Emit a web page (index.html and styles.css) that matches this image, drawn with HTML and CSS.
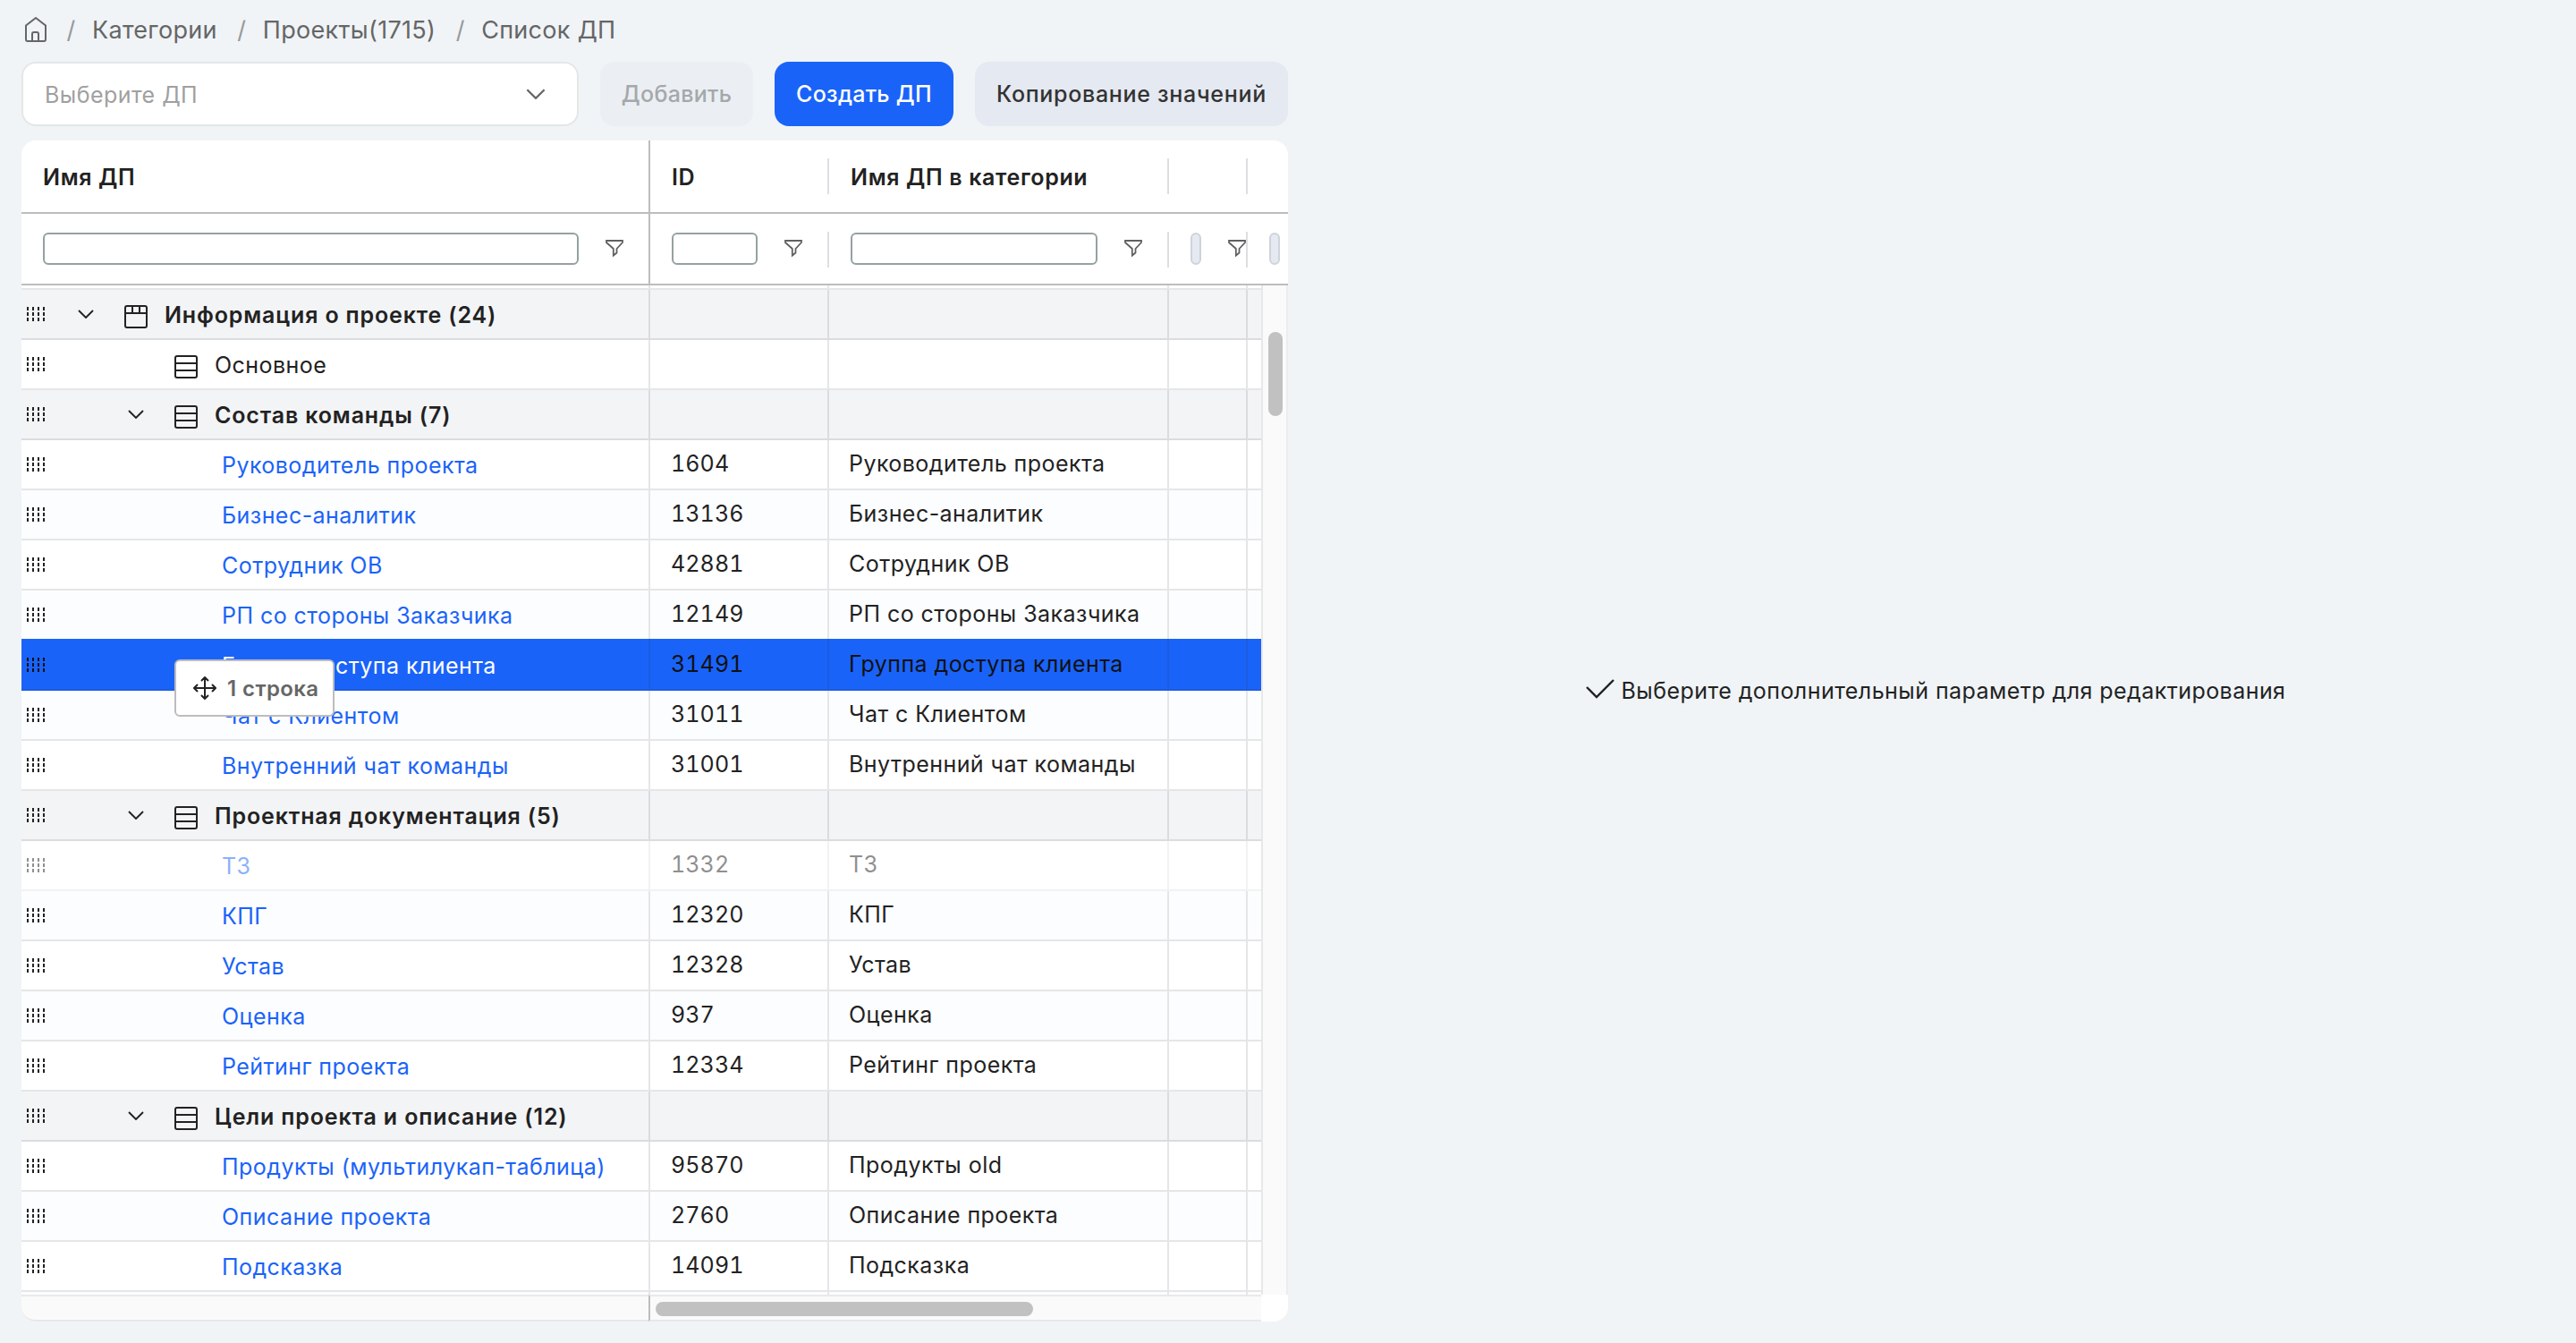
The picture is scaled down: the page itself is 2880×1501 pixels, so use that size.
FILE: index.html
```html
<!DOCTYPE html>
<html lang="ru">
<head>
	<meta charset="utf-8">
	<title>Список ДП</title>
	<link rel="stylesheet" href="styles.css">
</head>
<body>
	<svg class="sprite">
		<symbol id="grip" viewBox="0 0 20 16"><path d="M1 0v16M7 0v16M13 0v16M19 0v16" stroke="currentColor" stroke-width="2" stroke-dasharray="4 2"/></symbol>
		<symbol id="down" viewBox="0 0 18 10"><path d="M1 1l8 8 8-8" fill="none" stroke="currentColor" stroke-width="1.900"/></symbol>
		<symbol id="tab" viewBox="0 0 26 26"><path d="M3 1h20a2 2 0 0 1 2 2v20a2 2 0 0 1-2 2H3a2 2 0 0 1-2-2V3a2 2 0 0 1 2-2zM1 9h24M9 1v8M17 1v8" fill="none" stroke="currentColor" stroke-width="2"/></symbol>
		<symbol id="block" viewBox="0 0 26 26"><path d="M3 1h20a2 2 0 0 1 2 2v20a2 2 0 0 1-2 2H3a2 2 0 0 1-2-2V3a2 2 0 0 1 2-2zM1 9h24M1 17h24" fill="none" stroke="currentColor" stroke-width="2"/></symbol>
		<symbol id="filter" viewBox="0 0 20 20"><path d="M1 1h18v2l-6.500 7v4.500L8.800 17.500V10L1 3z" fill="none" stroke="currentColor" stroke-width="1.800"/></symbol>
	</svg>

	<div class="page">
		<section class="left">
			<nav class="crumbs">
				<svg class="home" viewBox="0 0 24 28"><path d="M1 9.500L12 1l11 8.500V25a2 2 0 0 1-2 2H3a2 2 0 0 1-2-2zM8 27v-8a2 2 0 0 1 2-2h3a2 2 0 0 1 2 2v8" fill="none" stroke="currentColor" stroke-width="2"/></svg>
				<i>/</i><a>Категории</a><i>/</i><a>Проекты(1715)</a><i>/</i><a>Список ДП</a>
			</nav>

			<div class="toolbar">
				<div class="select"><span>Выберите ДП</span><svg class="arrow"><use href="#down"/></svg></div>
				<button class="btn btn-disabled">Добавить</button>
				<button class="btn btn-primary">Создать ДП</button>
				<button class="btn btn-grey">Копирование значений</button>
			</div>

			<div class="grid">
				<div class="head titles">
					<div class="cell c1">Имя ДП</div>
					<div class="cell c2">ID</div>
					<div class="cell c3">Имя ДП в категории</div>
					<div class="cell c4"></div>
					<div class="cell c5"></div>
				</div>
				<div class="head filters">
					<div class="cell c1"><span class="input"></span><svg class="filter"><use href="#filter"/></svg></div>
					<div class="cell c2"><span class="input"></span><svg class="filter"><use href="#filter"/></svg></div>
					<div class="cell c3"><span class="input"></span><svg class="filter"><use href="#filter"/></svg></div>
					<div class="cell c4"><span class="input off"></span><svg class="filter"><use href="#filter"/></svg></div>
					<div class="cell c5"><span class="input off"></span></div>
				</div>
				<div class="body">
					<div class="rows" id="rows"></div>
					<div class="vscroll"><div class="vthumb"></div></div>
				</div>
				<div class="foot">
					<div class="foot-left"></div>
					<div class="hscroll"><div class="hthumb"></div></div>
				</div>

				<div class="drag">
					<svg viewBox="0 0 26 26"><path d="M13 1v24M1 13h24M9 5l4-4 4 4M9 21l4 4 4-4M5 9l-4 4 4 4M21 9l4 4-4 4" fill="none" stroke="currentColor" stroke-width="2"/></svg>
					<span>1 строка</span>
				</div>
			</div>
		</section>

		<section class="right">
			<svg viewBox="0 0 32 22"><path d="M1 9l11 11L31 1" fill="none" stroke="currentColor" stroke-width="2.400"/></svg>
			<span>Выберите дополнительный параметр для редактирования</span>
		</section>
	</div>
	<script src="script.js"></script>
</body>
</html>
```

FILE: styles.css
```css
* {
	box-sizing: border-box;
	margin: 0;
	padding: 0;
}

body {
	height: 1501px;
	overflow: hidden;
	background: #f0f4f7;
	color: #222;
	font-family: Inter, "Liberation Sans", sans-serif;
	font-size: 25px;
	letter-spacing: 0.45px;
}

.sprite {
	display: none;
}

svg {
	display: block;
	flex: none;
}

.page {
	display: flex;
	height: 1501px;
}

.left {
	width: 1440px;
	padding-left: 24px;
}

/* Breadcrumbs */
.crumbs {
	display: flex;
	align-items: center;
	height: 69px;
	padding: 0 0 3px 4px;
	color: #666;
	font-size: 27px;
	letter-spacing: 0.3px;
}

.crumbs i {
	width: 51px;
	padding-left: 4px;
	text-align: center;
	font-style: normal;
	color: #999;
}

.home {
	width: 24px;
	height: 28px;
}

/* Toolbar */
.toolbar {
	display: flex;
	gap: 24px;
	height: 72px;
	margin-bottom: 16px;
}

.select {
	display: flex;
	align-items: center;
	justify-content: space-between;
	width: 623px;
	padding: 0 35px 0 24px;
	border: 2px solid #e5e6e6;
	border-radius: 16px;
	background: #fff;
	color: #a0a0a0;
}

.select span {
	padding-top: 2px;
}

.arrow {
	width: 22px;
	height: 12px;
	color: #666;
}

.btn {
	border: none;
	border-radius: 16px;
	font: inherit;
	font-weight: 500;
	letter-spacing: 0.3px;
	white-space: nowrap;
}

.btn-disabled {
	width: 171px;
	background: #ebeff3;
	color: #a5a8ab;
}

.btn-primary {
	width: 200px;
	background: #1a63f9;
	color: #fff;
}

.btn-grey {
	width: 350px;
	background: #e5e9f1;
	color: #333;
	letter-spacing: 0.7px;
}

/* Table */
.grid {
	position: relative;
	height: 1320px;
	border-radius: 16px;
	background: #fff;
}

.head {
	display: flex;
	height: 82px;
	border-bottom: 2px solid #bdbdbd;
	font-weight: 600;
	letter-spacing: 0.65px;
	overflow: hidden;
}

.filters {
	height: 80px;
}

.cell {
	display: flex;
	align-items: center;
	flex: none;
	position: relative;
	white-space: nowrap;
}

.c1 { width: 703px; }
.c2 { width: 200px; }
.c3 { width: 380px; }
.c4 { width: 88px; }
.c5 { width: 45px; }

.head .cell {
	padding-left: 24px;
}

.titles .cell {
	padding-top: 2px;
}

.head .c1 {
	border-right: 2px solid #bdbdbd;
}

.head .c2::after,
.head .c3::after,
.head .c4::after {
	content: "";
	position: absolute;
	right: 0;
	top: 20px;
	width: 2px;
	height: 40px;
	background: #dcdfe2;
}

.input {
	flex: none;
	height: 36px;
	border: 2px solid #95a1a1;
	border-radius: 6px;
	background: #fff;
}

.c1 .input { width: 599px; }
.c2 .input { width: 96px; }
.c3 .input { width: 276px; }

.input.off {
	width: 12px;
	border-color: #ced4d9;
	background: #e5e9f1;
}

.filter {
	width: 20px;
	height: 20px;
	margin-left: 30px;
	color: #606060;
}

.body {
	display: flex;
	height: 1128px;
	overflow: hidden;
}

/* the list is scrolled, so the first row shows only its bottom edge */
.rows {
	width: 1386px;
	margin-top: -51px;
	overflow: hidden;
}

.row {
	display: flex;
	height: 56px;
	background: #fff;
}

.row.even {
	background: #fcfdff;
}

.row .cell {
	border-bottom: 2px solid #e4e6e7;
	border-right: 2px solid #e4e6e7;
}

.row .c2,
.row .c3 {
	padding: 0 0 2px 22px;
}

.row .c2 {
	font-variant-numeric: tabular-nums;
	letter-spacing: 0.1px;
	padding-left: 23px;
}

.row .c5 {
	border-right: none;
}

.row.group {
	background: #f3f4f6;
	font-weight: 600;
	letter-spacing: 0.85px;
}

.row.group .cell {
	border-color: #dadcdf;
}

.row .c1 a,
.row .c1 span {
	padding-top: 2px;
}

.row .c1 a {
	color: #1a63f9;
	margin-left: 198px;
}

.row.selected {
	position: relative;
	height: 58px;
	margin-top: -2px;
	background: #1a63f9;
	color: #111;
}

.row.selected .cell {
	padding-top: 2px;
	border-color: #1c5ce0;
}

.row.selected .c1 a {
	color: #fff;
}

.row.faded {
	opacity: 0.5;
}

.grip {
	width: 20px;
	height: 16px;
	margin-left: 6px;
}

.chev {
	width: 18px;
	height: 10px;
	margin-right: 34px;
}

.lvl1 { margin-left: 37px; }
.lvl2 { margin-left: 93px; }

.icon {
	width: 26px;
	height: 26px;
	margin-top: 6px;
	margin-right: 19px;
}

.lone {
	margin-left: 145px;
}

/* Scrollbars */
.vscroll {
	width: 30px;
	padding: 52px 0 0 6px;
	border-left: 2px solid #e8e8e8;
	border-right: 2px solid #ededed;
	background: #fafafa;
}

.vthumb {
	width: 16px;
	height: 94px;
	border-radius: 8px;
	background: #c1c1c1;
}

.foot {
	display: flex;
	height: 30px;
}

.foot-left {
	width: 701px;
	border: solid #e8e8e8;
	border-width: 2px 0;
	border-radius: 0 0 0 16px;
	background: #fafafa;
}

.hscroll {
	width: 685px;
	padding: 6px 0 0 6px;
	border: solid #e8e8e8;
	border-width: 2px 0;
	border-left: 2px solid #bdbdbd;
	background: #fafafa;
}

.hthumb {
	width: 422px;
	height: 16px;
	border-radius: 8px;
	background: #c1c1c1;
}

/* Dragged row hint */
.drag {
	position: absolute;
	left: 171px;
	top: 580px;
	display: flex;
	align-items: center;
	gap: 12px;
	width: 179px;
	height: 64px;
	padding-left: 19px;
	border: 2px solid #bdbdbd;
	border-radius: 6px;
	background: #fff;
	font-size: 24px;
	font-weight: 600;
	letter-spacing: 0.4px;
	white-space: nowrap;
}

.drag svg {
	width: 26px;
	height: 26px;
}

.drag span {
	color: #666;
}

/* Right side */
.right {
	display: flex;
	justify-content: center;
	align-items: center;
	gap: 8px;
	flex: 1;
	padding: 42px 0 0 8px;
}

.right svg {
	width: 32px;
	height: 22px;
	margin-bottom: 4px;
}
```

FILE: script.js
```js
// type, name, id, name in category, state
const data = [
	["item", "", "", ""],
	["tab", "Информация о проекте (24)"],
	["plain", "Основное"],
	["block", "Состав команды (7)"],
	["item", "Руководитель проекта", "1604", "Руководитель проекта"],
	["item", "Бизнес-аналитик", "13136", "Бизнес-аналитик"],
	["item", "Сотрудник ОВ", "42881", "Сотрудник ОВ"],
	["item", "РП со стороны Заказчика", "12149", "РП со стороны Заказчика"],
	["item", "Группа доступа клиента", "31491", "Группа доступа клиента", "selected"],
	["item", "Чат с Клиентом", "31011", "Чат с Клиентом"],
	["item", "Внутренний чат команды", "31001", "Внутренний чат команды"],
	["block", "Проектная документация (5)"],
	["item", "ТЗ", "1332", "ТЗ", "faded"],
	["item", "КПГ", "12320", "КПГ"],
	["item", "Устав", "12328", "Устав"],
	["item", "Оценка", "937", "Оценка"],
	["item", "Рейтинг проекта", "12334", "Рейтинг проекта"],
	["block", "Цели проекта и описание (12)"],
	["item", "Продукты (мультилукап-таблица)", "95870", "Продукты old"],
	["item", "Описание проекта", "2760", "Описание проекта"],
	["item", "Подсказка", "14091", "Подсказка"],
	["item", "", "", ""]
];

const svg = (cls, id) => `<svg class="${cls}"><use href="#${id}"/></svg>`;

function nameCell(type, name) {
	if (type === "item") return `<a>${name}</a>`;
	if (type === "tab") return svg("chev lvl1", "down") + svg("icon", "tab") + `<span>${name}</span>`;
	if (type === "plain") return svg("icon lone", "block") + `<span>${name}</span>`;
	return svg("chev lvl2", "down") + svg("icon", "block") + `<span>${name}</span>`;
}

document.getElementById("rows").innerHTML = data.map(([type, name, id = "", cat = "", state = ""], i) => {
	const group = type === "tab" || type === "block" ? "group" : "";
	const even = i % 2 ? "even" : "";
	return `<div class="row ${even} ${group} ${state}">
		<div class="cell c1">${svg("grip", "grip")}${nameCell(type, name)}</div>
		<div class="cell c2">${id}</div>
		<div class="cell c3">${cat}</div>
		<div class="cell c4"></div>
		<div class="cell c5"></div>
	</div>`;
}).join("");
```
